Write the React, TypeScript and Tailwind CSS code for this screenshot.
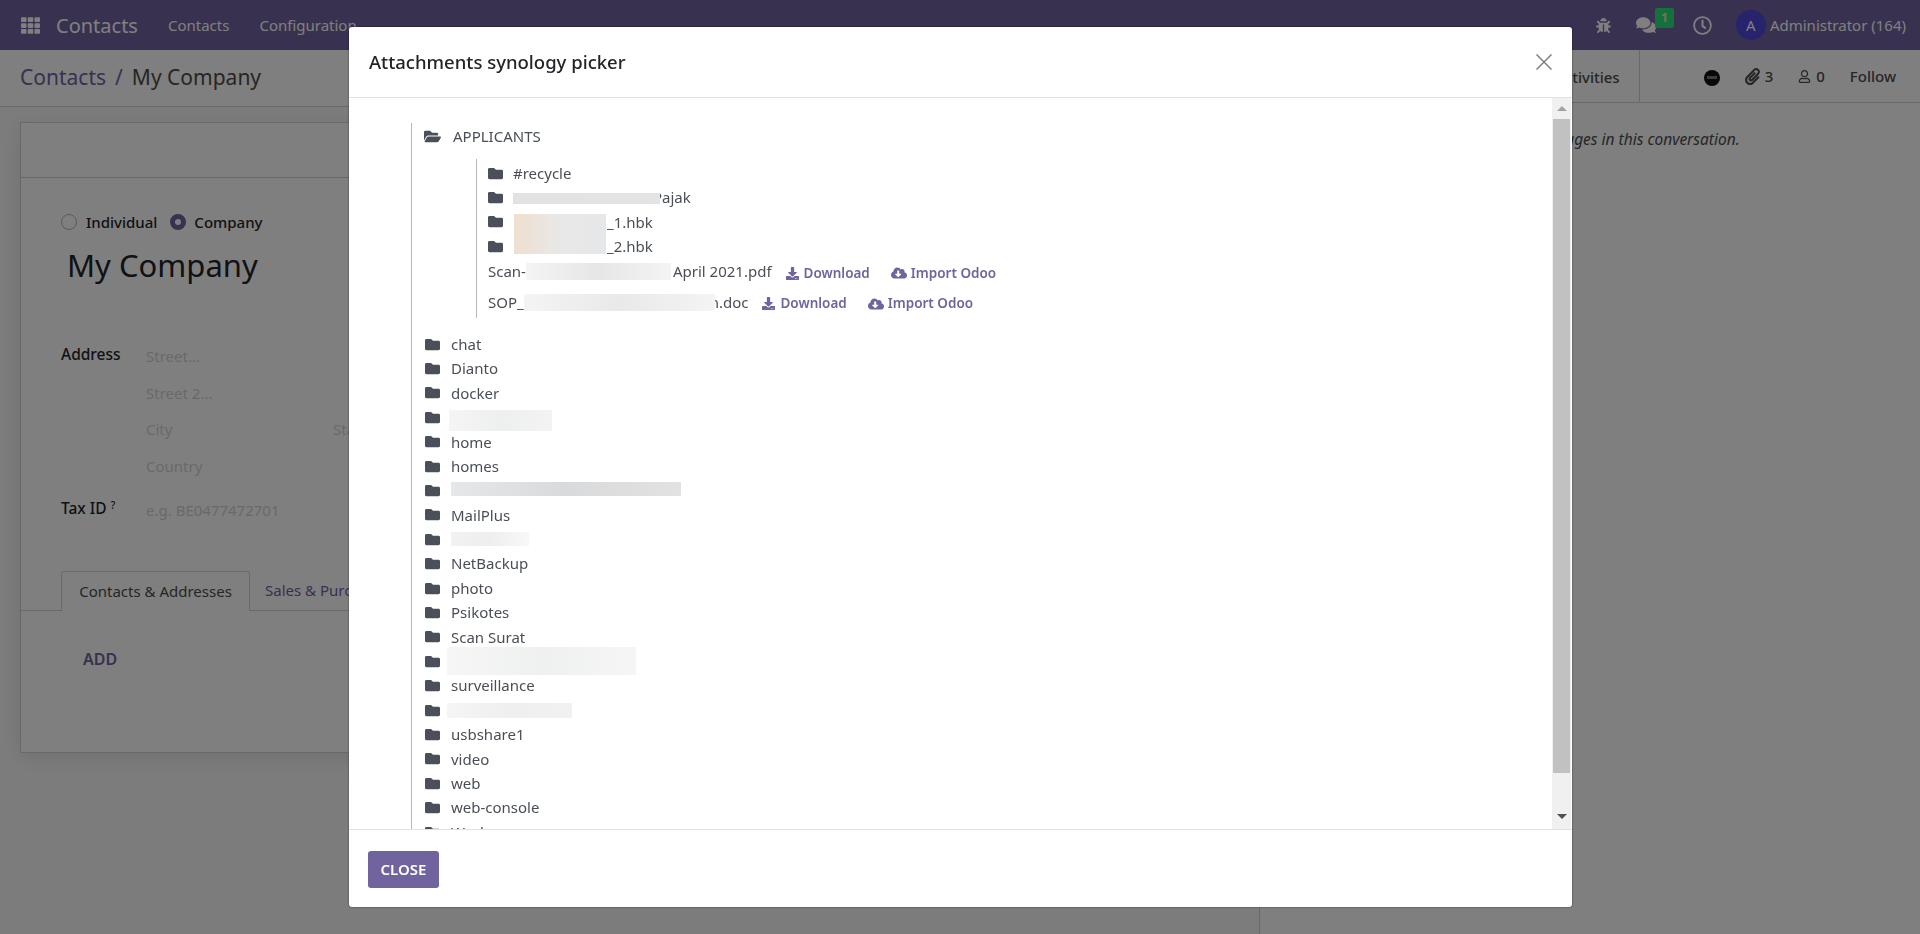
import { FaBug, FaCloudDownloadAlt, FaComments, FaDownload, FaFolder, FaFolderOpen, FaPaperclip, FaRegClock, FaRegUser, FaTh } from "react-icons/fa"

interface FolderRow {
  name?: string
  blur?: string
}

// top level shares, blurred ones carry their own patch size
const folders: FolderRow[] = [
  { name: "chat" },
  { name: "Dianto" },
  { name: "docker" },
  { blur: "w-[103px] h-[21px] ml-[9px] mt-[7px] bg-gradient-to-r from-[#f5f5f5] via-[#eeefef] to-[#f3f3f3]" },
  { name: "home" },
  { name: "homes" },
  { blur: "w-[230px] h-[14px] ml-[11px] mb-[3px] bg-gradient-to-r from-[#e6e7e8] via-[#d9dadb] to-[#e2e2e3]" },
  { name: "MailPlus" },
  { blur: "w-[78px] h-[14px] ml-[11px] bg-gradient-to-r from-[#f1f2f2] via-[#eeeeee] to-[#f8f8f8]" },
  { name: "NetBackup" },
  { name: "photo" },
  { name: "Psikotes" },
  { name: "Scan Surat" },
  { blur: "w-[189px] h-[28px] ml-[7px] bg-gradient-to-r from-[#f6f6f6] via-[#eff0f0] to-[#f6f6f6]" },
  { name: "surveillance" },
  { blur: "w-[125px] h-[15px] ml-[7px] bg-gradient-to-r from-[#f5f5f5] via-[#efefef] to-[#f1f1f1]" },
  { name: "usbshare1" },
  { name: "video" },
  { name: "web" },
  { name: "web-console" },
  { name: "Work" },
]

function FileActions({ className }: { className: string }) {
  return (
    <span className={`flex items-center text-[13.5px] font-semibold text-[#71639e] ${className}`}>
      <FaDownload size={13} className="mr-[5px]" />
      Download
      <FaCloudDownloadAlt size={16} className="ml-[21px] mr-[4px]" />
      Import Odoo
    </span>
  )
}

function Picker() {
  return (
    <div className="ml-[62px] mt-[25px] border-l border-[#b8b8b8] pl-[13px] text-[15px] text-[#4a4f57]">
      <div className="flex h-[27px] items-center">
        <FaFolderOpen size={17} className="ml-[-1px] text-[#4a4f5a]" />
        <span className="ml-[12px]">APPLICANTS</span>
      </div>
      <div className="ml-[51px] mt-[9px] mb-[14px] h-[159px] border-l border-[#b8b8b8] pl-[11px] pt-[2px]">
        <div className="flex h-[24.4px] items-center">
          <FaFolder size={15} className="text-[#4a4f5a]" />
          <span className="ml-[10px]">#recycle</span>
        </div>
        <div className="flex h-[24.4px] items-center">
          <FaFolder size={15} className="text-[#4a4f5a]" />
          <span className="relative ml-[10px] mr-[-7px] mt-[2px] h-[11px] w-[147px] bg-gradient-to-r from-[#e2e2e2] to-[#e4e4e4]" />
          <span>Pajak</span>
        </div>
        <div className="relative flex h-[24.4px] items-center">
          <FaFolder size={15} className="text-[#4a4f5a]" />
          <span className="absolute left-[26px] top-[4px] z-10 h-[40px] w-[92px] bg-gradient-to-r from-[#efdfcf] via-[#e8e8e8] to-[#e6e7e8]" />
          <span className="ml-[104px]">_1.hbk</span>
        </div>
        <div className="flex h-[24.4px] items-center">
          <FaFolder size={15} className="text-[#4a4f5a]" />
          <span className="ml-[104px]">_2.hbk</span>
        </div>
        <div className="flex h-[25px] items-center">
          <span>Scan-</span>
          <span className="h-[17px] w-[145px] bg-gradient-to-r from-[#f4f4f4] via-[#e6e6e6] to-[#f4f4f4]" />
          <span className="ml-[2px]">April 2021.pdf</span>
          <FileActions className="ml-[14px] mt-[4px]" />
        </div>
        <div className="mt-[4px] flex h-[30px] items-center">
          <span>SOP_</span>
          <span className="relative mr-[-5px] h-[17px] w-[191px] bg-gradient-to-r from-[#f4f4f4] via-[#e9e9e9] to-[#f4f4f4]" />
          <span>n.doc</span>
          <FileActions className="ml-[14px] mt-[2px]" />
        </div>
      </div>
      {folders.map((f, i) => (
        <div key={i} className="flex h-[24.4px] items-center">
          <FaFolder size={15} className="shrink-0 text-[#4a4f5a]" />
          {f.name ? <span className="ml-[11px]">{f.name}</span> : <span className={f.blur} />}
        </div>
      ))}
    </div>
  )
}

function PickerDialog() {
  return (
    <div className="fixed inset-0 bg-black/50">
      <div className="ml-[349px] mt-[27px] flex h-[880px] w-[1223px] flex-col overflow-hidden rounded-[3px] bg-white shadow-[0_0_2px_rgba(0,0,0,0.6)]">
        <div className="flex h-[71px] shrink-0 items-center justify-between border-b border-[#dee2e6] pl-[20px] pr-[20px]">
          <h4 className="text-[18.5px] font-medium text-[#212529]">Attachments synology picker</h4>
          <svg width="16" height="16" viewBox="0 0 16 16" className="text-[#7f7f7f]">
            <path d="M0.5 0.5 15.5 15.5 M15.5 0.5 0.5 15.5" stroke="currentColor" strokeWidth="1.5" fill="none" />
          </svg>
        </div>
        <div className="flex min-h-0 flex-1">
          <div className="min-w-0 flex-1 overflow-hidden">
            <Picker />
          </div>
          <div className="mr-px flex w-[19px] shrink-0 flex-col items-center bg-[#f0f0f0] px-px">
            <div className="flex h-[21px] w-full shrink-0 items-center justify-center">
              <span className="h-0 w-0 border-x-[5px] border-b-[5px] border-x-transparent border-b-[#a3a3a3]" />
            </div>
            <div className="h-[654px] w-full shrink-0 bg-[#c1c1c1]" />
            <div className="flex w-full flex-1 items-end justify-center pb-[10px]">
              <span className="h-0 w-0 border-x-[5px] border-t-[5px] border-x-transparent border-t-[#505050]" />
            </div>
          </div>
        </div>
        <div className="flex h-[78px] shrink-0 items-center border-t border-[#dee2e6] pl-[19px]">
          <button className="mt-[2px] h-[37px] w-[71px] rounded-[3px] bg-[#71639e] text-[15px] font-semibold text-white">
            CLOSE
          </button>
        </div>
      </div>
    </div>
  )
}

export default function App() {
  return (
    <div className="flex h-screen w-full flex-col overflow-hidden bg-white font-['Noto_Sans',sans-serif] text-[15px] text-[#4c4c4c]">
      <nav className="flex h-[50px] shrink-0 items-center bg-[#71639e] text-white">
        <FaTh size={19} className="ml-[21px]" />
        <span className="ml-[16px] mt-[1px] text-[20px]">Contacts</span>
        <span className="ml-[30px] mt-[1px] text-[15px]">Contacts</span>
        <span className="ml-[30px] mt-[1px] text-[15px]">Configuration</span>
        <div className="ml-auto flex items-center pr-[14px]">
          <FaBug size={15} />
          <div className="relative ml-[25px]">
            <FaComments size={20} />
            <span className="absolute left-[19px] top-[-7px] flex h-[20px] w-[19px] items-center justify-center rounded-[2px] bg-[#28e078] text-[12px] font-bold text-[#ffe0a0]">
              1
            </span>
          </div>
          <FaRegClock size={19} className="ml-[37px]" />
          <span className="ml-[24px] flex h-[30px] w-[30px] items-center justify-center rounded-full bg-[#4f46d8] text-[15px]">A</span>
          <span className="ml-[4px] mt-[1px] text-[15px]">Administrator (164)</span>
        </div>
      </nav>

      <div className="flex min-h-0 flex-1">
        <div className="flex w-[1259px] shrink-0 flex-col bg-[#f9f9f9]">
          <div className="flex h-[57px] shrink-0 items-center border-b border-[#ced4da] bg-white pl-[20px] text-[21px]">
            <span className="text-[#71639e]">Contacts</span>
            <span className="mx-[9px] text-[#71639e]">/</span>
            <span>My Company</span>
          </div>
          <div className="mx-[20px] mt-[15px] h-[631px] border border-[#ced4da] bg-white shadow-[0_5px_20px_rgba(0,0,0,0.1)]">
            <div className="h-[55px] border-b border-[#ced4da]" />
            <div className="pl-[40px] pt-[33px]">
              <div className="flex items-center font-medium text-[#212529]">
                <span className="h-[16px] w-[16px] rounded-full border border-[#adb5bd] bg-white" />
                <span className="ml-[9px]">Individual</span>
                <span className="ml-[13px] h-[16px] w-[16px] rounded-full border-[5px] border-[#71639e] bg-white" />
                <span className="ml-[8px]">Company</span>
              </div>
              <h1 className="ml-[6px] mt-[7px] text-[31px] leading-[48px] text-[#212529]">My Company</h1>
              <div className="mt-[54px] grid grid-cols-[85px_1fr] text-[15px] text-[#d3d3d3]">
                <span className="text-[15.5px] font-medium text-[#212529]">Address</span>
                <div>
                  <div className="mt-[2px] h-[37px]">Street...</div>
                  <div className="h-[36px]">Street 2...</div>
                  <div className="flex h-[37px]">
                    <span className="w-[187px]">City</span>
                    <span>State</span>
                  </div>
                  <div className="h-[39px]">Country</div>
                </div>
                <span className="mt-[3px] text-[15.5px] font-medium text-[#212529]">
                  Tax ID <sup className="text-[10px]">?</sup>
                </span>
                <div className="mt-[5px]">e.g. BE0477472701</div>
              </div>
            </div>
            <div className="mt-[50px] flex h-[40px] border-b border-[#ced4da] pl-[40px] text-[15px]">
              <div className="flex h-[40px] w-[189px] items-center justify-center rounded-t-[3px] border border-b-0 border-[#ced4da] bg-white">
                Contacts &amp; Addresses
              </div>
              <span className="ml-[15px] flex items-center text-[#71639e]">Sales &amp; Purchase</span>
            </div>
            <div className="ml-[62px] mt-[36px] text-[16px] font-semibold text-[#71639e]">ADD</div>
          </div>
        </div>

        <div className="min-w-0 flex-1 border-l border-[#ced4da]">
          <div className="flex h-[53px] items-center border-b border-[#ced4da] font-medium">
            <span className="ml-[295px] mt-[2px] text-[15px]">Activities</span>
            <span className="ml-[19px] h-full border-l border-[#ced4da]" />
            <svg width="16" height="16" viewBox="0 0 16 16" className="ml-[64px] mt-[4px]">
              <circle cx="8" cy="8" r="8" fill="#111" />
              <rect x="3" y="6" width="10" height="3" fill="#777" />
            </svg>
            <FaPaperclip size={17} className="ml-[24px]" />
            <span className="ml-[4px] mt-[1px] text-[15px]">3</span>
            <FaRegUser size={13} className="ml-[25px]" />
            <span className="ml-[5px] mt-[1px] text-[15px]">0</span>
            <span className="ml-[25px] mt-[1px] text-[15px]">Follow</span>
          </div>
          <p className="mt-[25px] text-center text-[15.5px] italic">There are no messages in this conversation.</p>
        </div>
      </div>

      <PickerDialog />
    </div>
  )
}
